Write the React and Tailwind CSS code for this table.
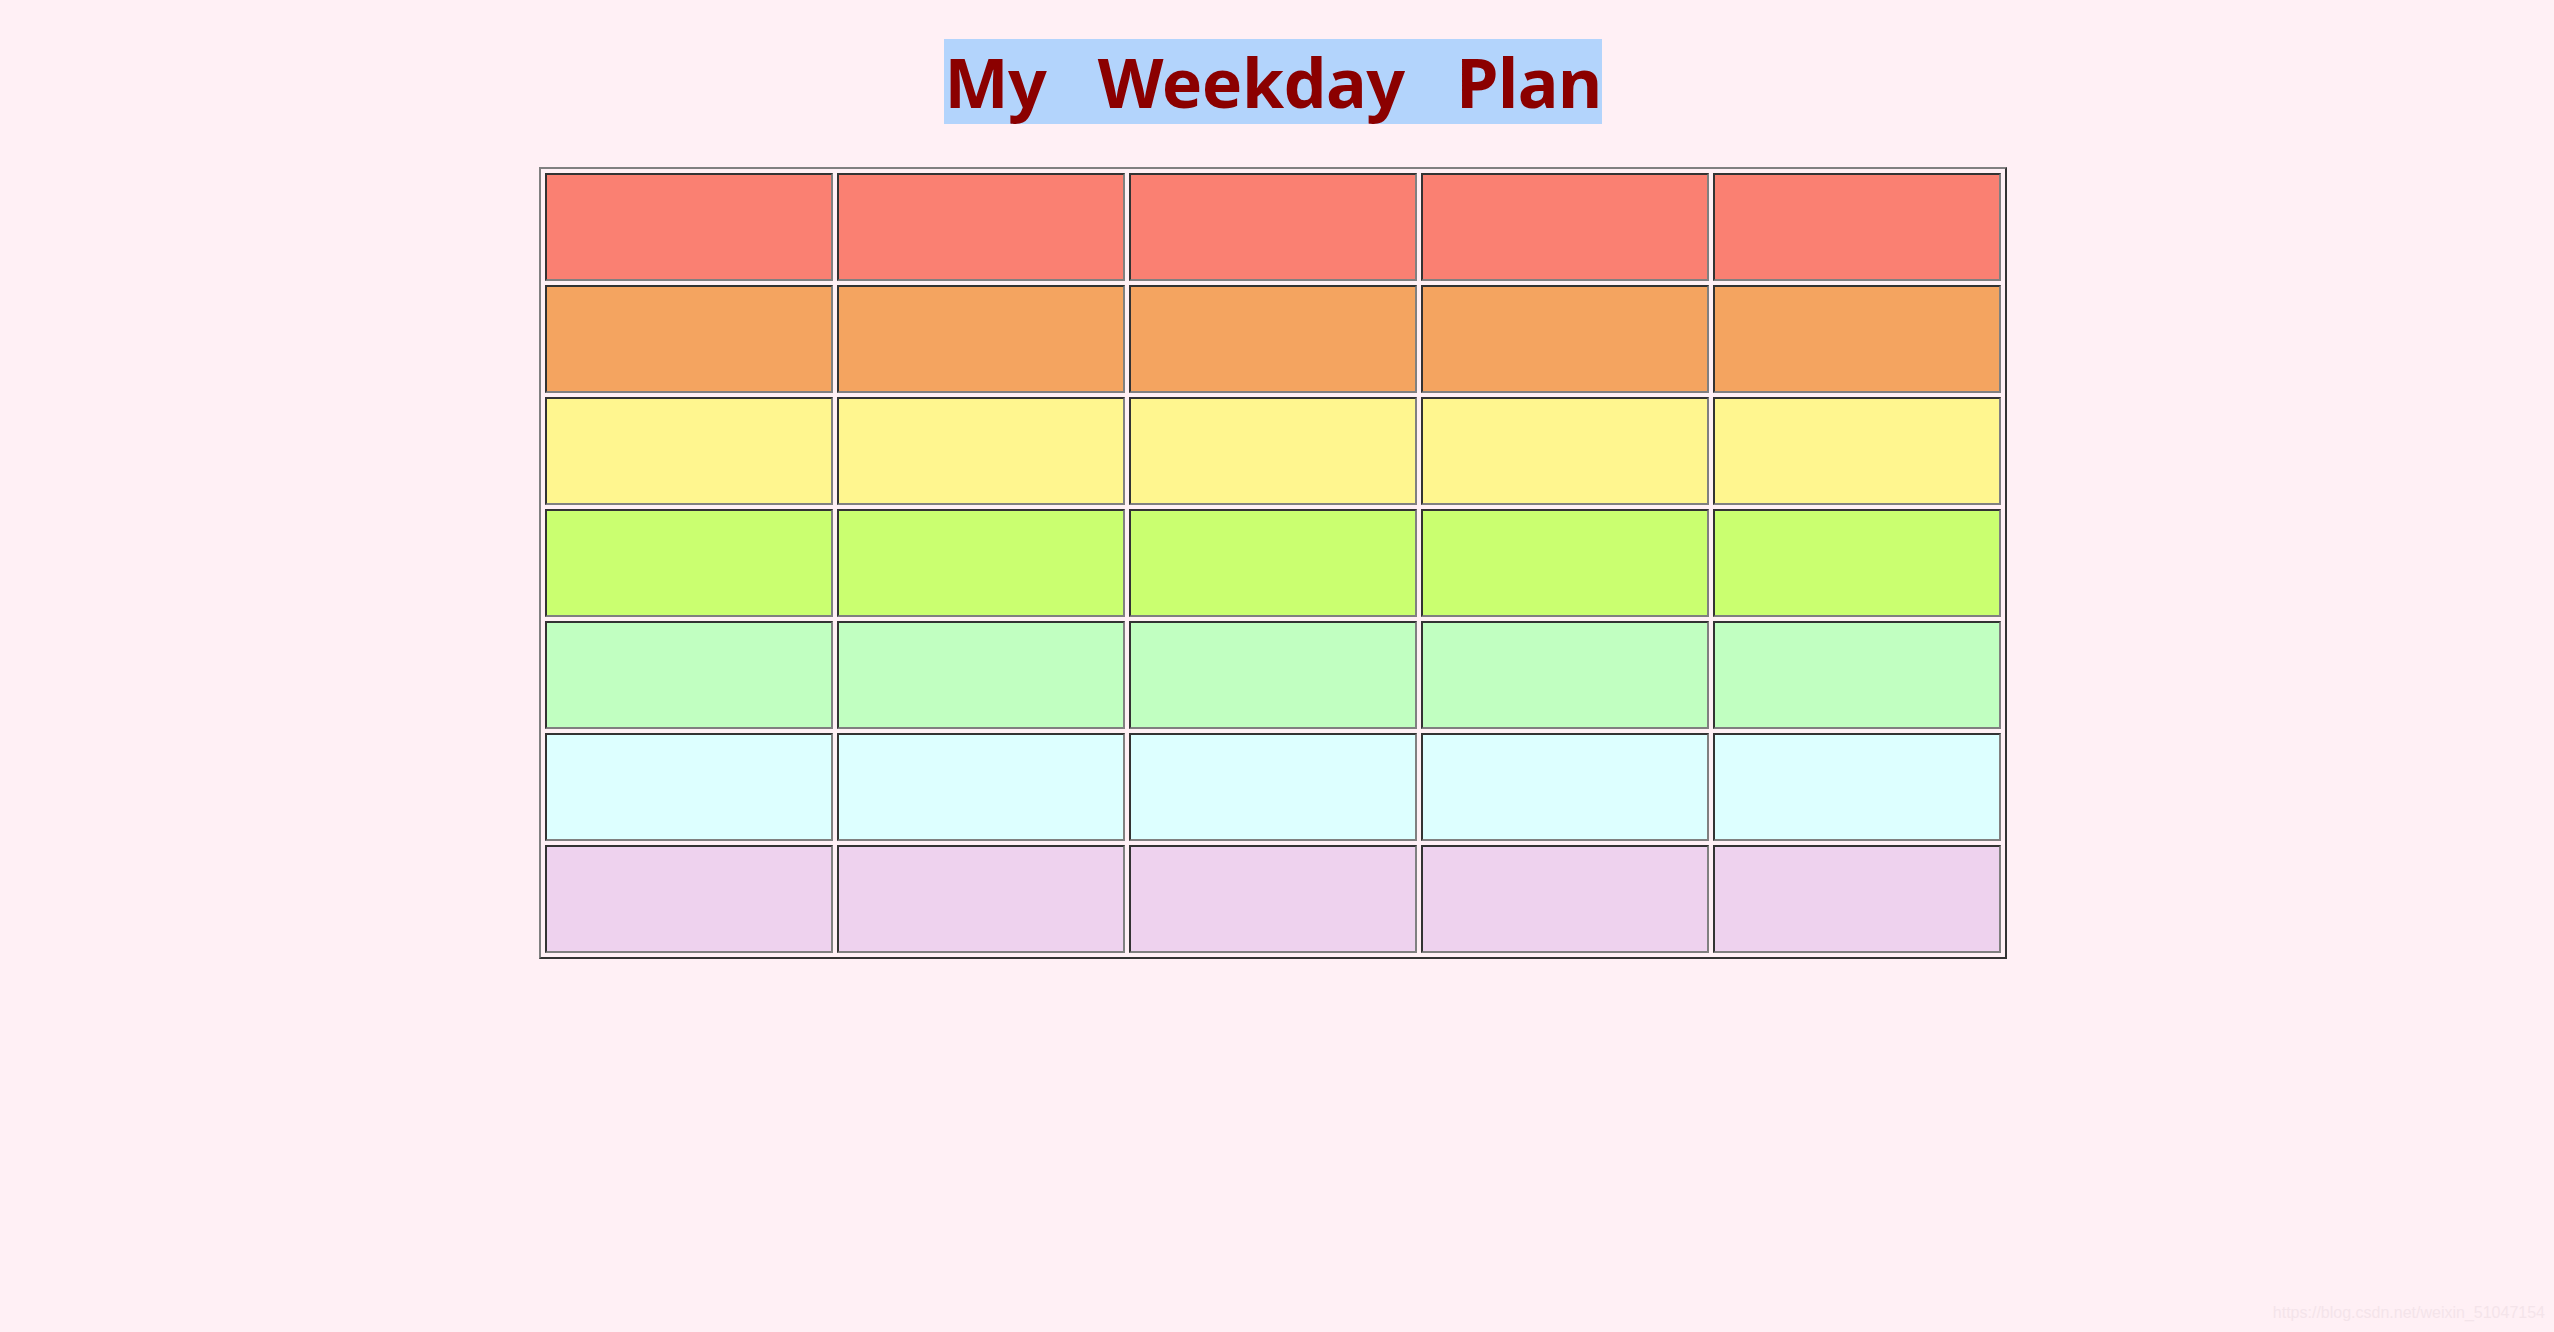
import React from "react";

const rows = [
  "bg-[#FA8072]",
  "bg-[#F4A460]",
  "bg-[#FFF68F]",
  "bg-[#CAFF70]",
  "bg-[#C1FFC1]",
  "bg-[#DDFFFF]",
  "bg-[#EED2EE]",
];

export default function App() {
  return (
    <div className="relative min-h-[1332px] w-full bg-[#FFF0F5] overflow-hidden">
      <div className="w-[2546px] flex flex-col items-center pt-[39px]">
        <h1
          className="h-[85px] leading-[85px] bg-[#B3D4FC] text-[#8B0000] font-bold text-[68px] tracking-[-0.5px] whitespace-pre"
          style={{ fontFamily: '"Noto Sans", "Open Sans", sans-serif' }}
        >
          {"My   Weekday   Plan"}
        </h1>
        <div className="mt-[43px] border-2 border-t-[#808080] border-l-[#808080] border-r-[#333333] border-b-[#333333] p-[4px] grid grid-cols-[repeat(5,288px)] gap-[4px]">
          {rows.map((bg, r) =>
            [0, 1, 2, 3, 4].map((c) => (
              <div
                key={r + "-" + c}
                className={`h-[108px] border-2 border-t-[#333333] border-l-[#333333] border-r-[#808080] border-b-[#808080] ${bg}`}
              />
            ))
          )}
        </div>
      </div>
      <div
        className="absolute right-[9px] bottom-[9px] text-[16px] leading-[20px] text-[#f4e4ea]"
        style={{ fontFamily: '"Liberation Sans", Arial, sans-serif' }}
      >
        https://blog.csdn.net/weixin_51047154
      </div>
    </div>
  );
}
